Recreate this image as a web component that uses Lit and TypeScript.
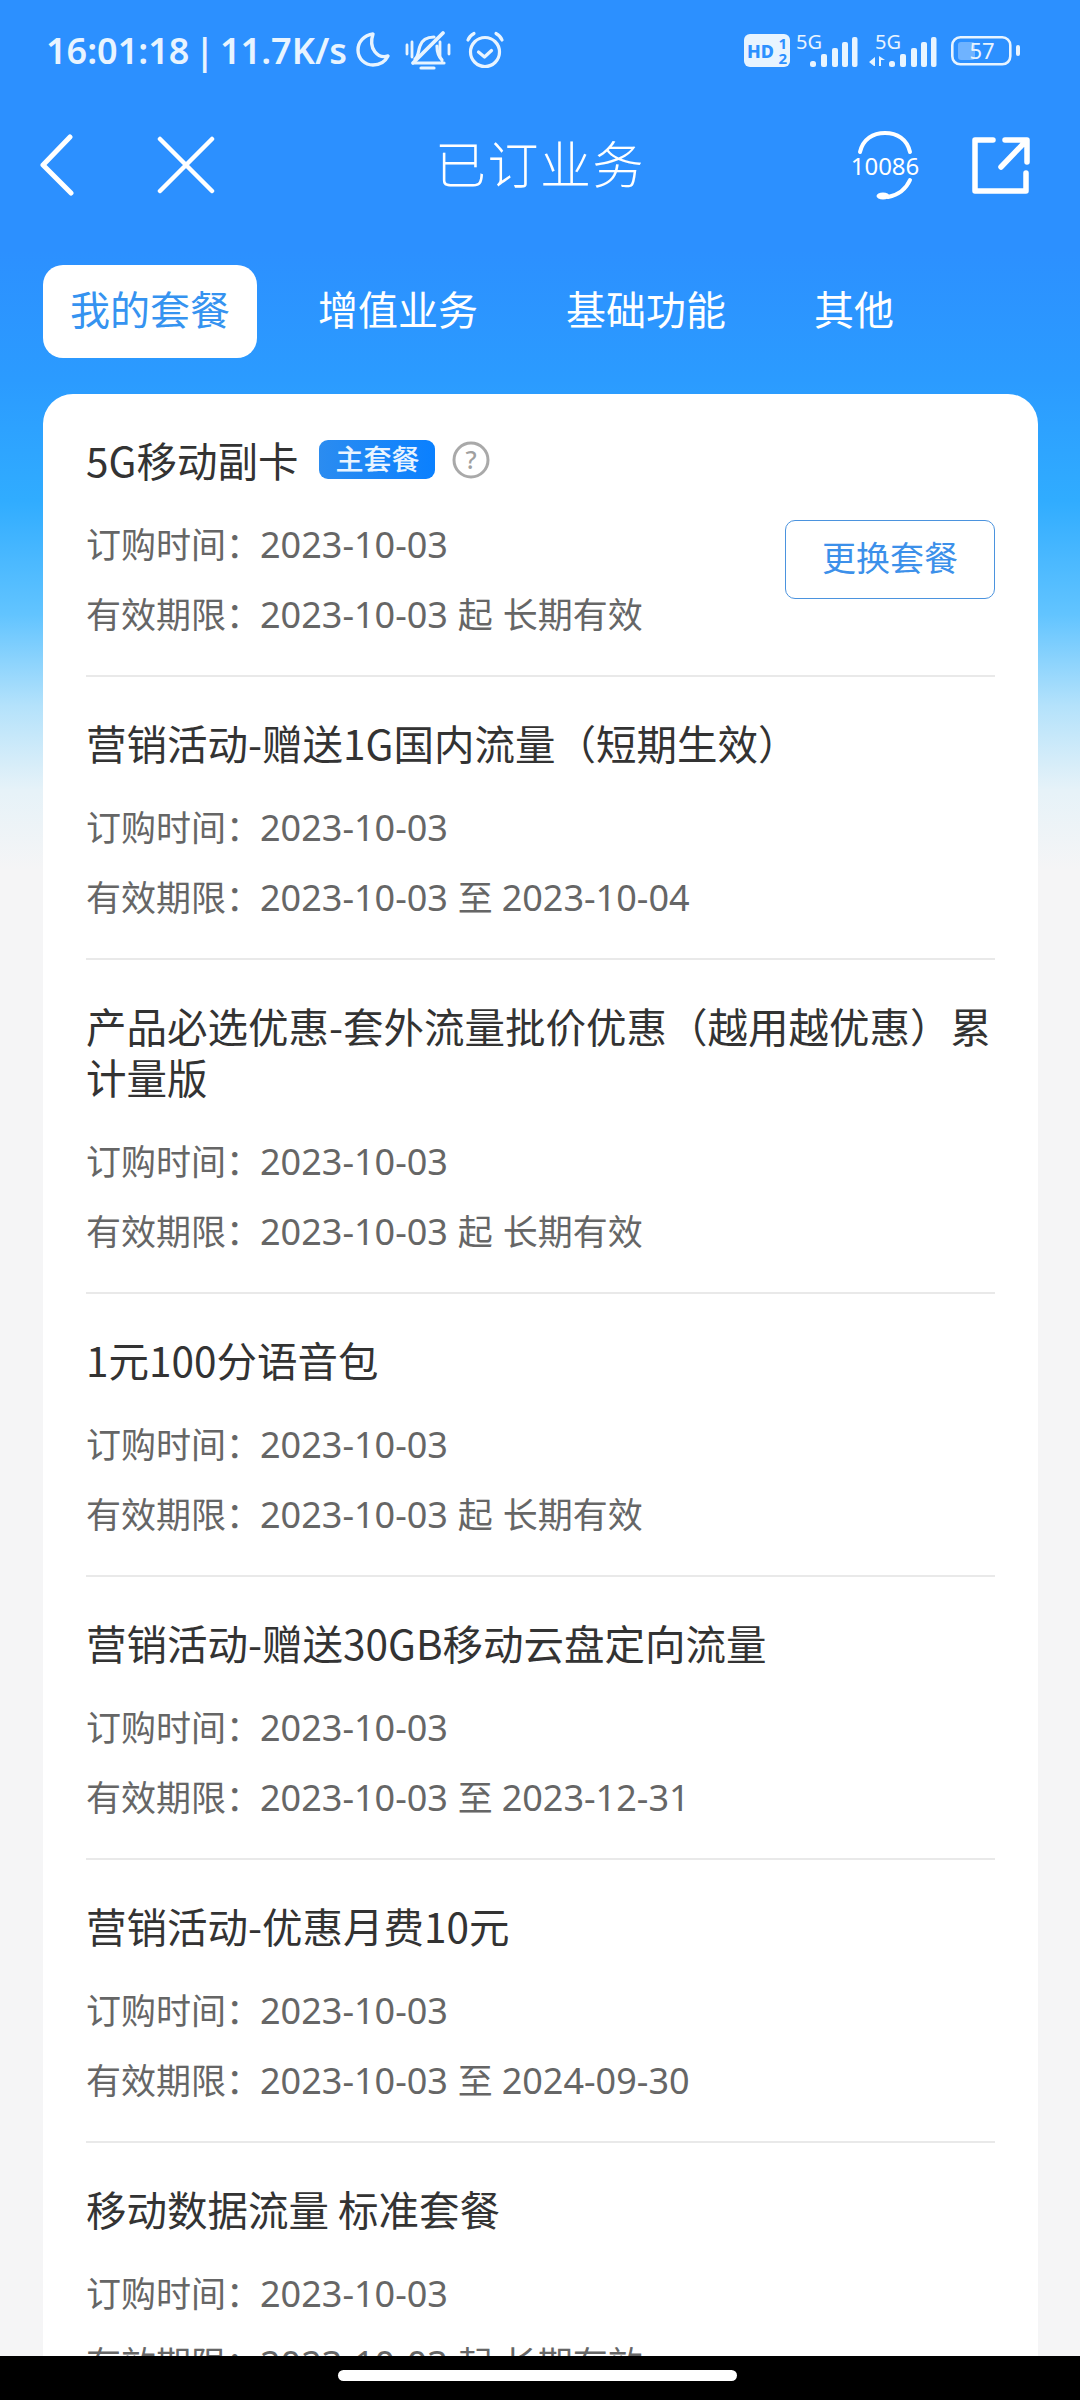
import { LitElement, html, css, svg } from "lit";
import { customElement } from "lit/decorators.js";

interface Item { title: string; time: string; term: string; main?: boolean; }
const items: Item[] = [
  { title: "5G移动副卡", time: "2023-10-03", term: "2023-10-03 起 长期有效", main: true },
  { title: "营销活动-赠送1G国内流量（短期生效）", time: "2023-10-03", term: "2023-10-03 至 2023-10-04" },
  { title: "产品必选优惠-套外流量批价优惠（越用越优惠）累计量版", time: "2023-10-03", term: "2023-10-03 起 长期有效" },
  { title: "1元100分语音包", time: "2023-10-03", term: "2023-10-03 起 长期有效" },
  { title: "营销活动-赠送30GB移动云盘定向流量", time: "2023-10-03", term: "2023-10-03 至 2023-12-31" },
  { title: "营销活动-优惠月费10元", time: "2023-10-03", term: "2023-10-03 至 2024-09-30" },
  { title: "移动数据流量 标准套餐", time: "2023-10-03", term: "2023-10-03 起 长期有效" },
];

const bars = svg`<rect x="0" y="24" width="6" height="6" rx="2.500"/><rect x="11" y="17" width="6" height="13" rx="2"/><rect x="22" y="11" width="6" height="19" rx="2"/><rect x="32" y="5" width="6" height="25" rx="2"/><rect x="42" y="0" width="5.500" height="30" rx="2"/>`;

@customElement("app-root")
export class AppRoot extends LitElement {
  static styles = css`
    :host { display: block; width: 1080px; height: 2400px; overflow: hidden; font-family: "Noto Sans CJK SC", "Noto Sans", sans-serif; }
    .page { height: 2400px; display: flex; flex-direction: column;
      background: linear-gradient(180deg, #2c90ff 0, #2c90ff 250px, #2b9bff 380px, #30acff 500px, #62c4ff 615px, #b4e2fb 706px, #e6f2f8 790px, #f5f5f6 870px, #f5f5f6 100%); }
    .status { height: 100px; box-sizing: border-box; padding: 0 60px 0 46px; display: flex; align-items: center; color: #e8f4ff; flex: none; }
    .clock { font: 600 36px "Noto Sans", sans-serif; word-spacing: -4px; white-space: nowrap; }
    .status svg { display: block; flex: none; }
    .moon { margin-left: 8px; }
    .bell, .alarm { margin-left: 14px; }
    .spacer { flex: 1; }
    .nav { height: 130px; flex: none; display: grid; grid-template-columns: 1fr auto 1fr; align-items: center; padding: 0 40px; }
    .nav-left { display: flex; align-items: center; gap: 83px; }
    .nav-right { display: flex; align-items: center; justify-content: flex-end; gap: 52px; margin-right: 10px; }
    .nav svg { display: block; }
    .nav-title { color: #fff; font-size: 51px; font-weight: 300; letter-spacing: 1.500px; line-height: 60px; margin-top: -6px; }
    .tabs { flex: none; display: flex; align-items: center; padding: 35px 0 0 43px; height: 93px; }
    .tab { color: #fff; font-size: 40px; height: 93px; line-height: 87px; padding: 0 27px; margin-right: 34px; box-sizing: border-box; white-space: nowrap; }
    .tab.active { background: #fff; color: #3593f0; border-radius: 20px; }
    .body { flex: 1; min-height: 0; overflow: hidden; padding: 36px 42px 0 43px; }
    .card { background: #fff; border-radius: 30px 30px 0 0; padding: 0 43px; }
    .item { padding: 40px 0 27px; border-bottom: 2px solid #e9e9e9; }
    .item:last-child { border-bottom: none; }
    .title { color: #333; font-size: 40.500px; line-height: 51px; display: flex; align-items: center; }
    .title-text { min-width: 0; }
    .badge { margin-left: 21px; width: 116px; height: 39px; border-radius: 9px; flex: none; background: linear-gradient(90deg, #2b8cf0, #0a80ff); color: #e9f4ff; font-size: 28px; font-weight: 500; line-height: 37px; text-align: center; }
    .help { margin-left: 17px; flex: none; display: block; }
    .rows { margin-top: 23px; position: relative; }
    .row { color: #666; font-size: 35px; height: 70px; line-height: 69px; white-space: nowrap; word-spacing: 2px; }
    .row .val { font-family: "Noto Sans", sans-serif; font-size: 36px; word-spacing: 0; margin-left: -1px; }
    .change { position: absolute; right: 0; top: 12px; width: 210px; height: 79px; box-sizing: border-box; border: 1.500px solid #4b93de; border-radius: 10px; color: #3c90ea; font-size: 34px; line-height: 72px; text-align: center; background: #fff; }
    .home { flex: none; height: 44px; background: #000; display: flex; justify-content: center; padding-top: 14px; box-sizing: border-box; }
    .pill { width: 399px; height: 11px; background: #fff; border-radius: 6px; margin-left: -5px; }
  `;

  private statusIcons() {
    return html`
      <svg class="moon" width="36" height="38" viewBox="0 0 36 38" fill="none" stroke="#e8f4ff" stroke-width="3.400" stroke-linecap="round" stroke-linejoin="round"><path d="M18 3C9 4 3 11 3 19c0 9 7 15 15 15 7 0 12-3 15-9-10 3-20-7-15-22z"/></svg>
      <svg class="bell" width="46" height="40" viewBox="0 0 46 40" fill="none" stroke="#e8f4ff" stroke-width="3" stroke-linecap="round" stroke-linejoin="round"><path d="M2 15v9M7 12v15M35 12v15M44 15v9" stroke-width="2.800"/><path d="M10 29c4-3 3-8 5-13 2-6 7-9 14-9M32 16c0 6 2 11 5 14M10 33h29M16 38h13" stroke-width="3.200"/><path d="M8 33 38 3" stroke-width="3.800"/></svg>
      <svg class="alarm" width="40" height="38" viewBox="0 0 40 38" fill="none" stroke="#e8f4ff" stroke-width="3.200" stroke-linecap="round" stroke-linejoin="round"><circle cx="20" cy="21" r="14.500"/><path d="M13.500 21l6 5 7-6.500M3 9c1-3 3-5 6-6.500M37 9c-1-3-3-5-6-6.500"/></svg>
      <div class="spacer"></div>
      <svg width="276" height="44" viewBox="0 -4 276 44">
        <rect x="0" y="2" width="46" height="33" rx="6" fill="#e8f4ff"/>
        <text x="3" y="26" font-family="Noto Sans" font-weight="800" font-size="18" fill="#2c90ff">HD</text>
        <text x="34.500" y="17" font-family="Noto Sans" font-weight="700" font-size="15" fill="#2c90ff">1</text>
        <text x="34.500" y="32" font-family="Noto Sans" font-weight="700" font-size="15" fill="#2c90ff">2</text>
        <text x="52" y="17" font-family="Noto Sans" font-size="20" fill="#e8f4ff">5G</text>
        <g fill="#e8f4ff" transform="translate(66 5)">${bars}</g>
        <text x="131" y="17" font-family="Noto Sans" font-size="20" fill="#e8f4ff">5G</text>
        <path d="M131 25v9h-1l-5-4zM135 24v10h2v-6h4z" fill="#e8f4ff"/>
        <g fill="#e8f4ff" transform="translate(145 5)">${bars}</g>
        <g transform="translate(207 0)">
          <rect x="1.300" y="5.300" width="58" height="27" rx="8" fill="none" stroke="#e8f4ff" stroke-width="2.600"/>
          <rect x="7" y="10" width="17" height="18" rx="3" fill="#6fb3ff"/>
          <text x="31" y="27" text-anchor="middle" font-family="Noto Sans" font-size="22" fill="#e8f4ff">57</text>
          <rect x="65" y="13" width="4" height="11" rx="2" fill="#e8f4ff"/>
        </g>
      </svg>`;
  }

  private term(text: string) {
    const parts = text.split(" ");
    return parts.map((p, i) => html`${/^\d/.test(p) ? html`<span class="val">${p}</span>` : p}${i < parts.length - 1 ? " " : ""}`);
  }

  render() {
    return html`<div class="page">
      <div class="status">
        <span class="clock">16:01:18 | 11.7K/s</span>
        ${this.statusIcons()}
      </div>
      <div class="nav">
        <div class="nav-left">
          <svg width="34" height="62" viewBox="0 0 34 62" fill="none" stroke="#fff" stroke-width="5" stroke-linecap="round" stroke-linejoin="round"><path d="M30 3 3 31l28 28"/></svg>
          <svg width="58" height="58" viewBox="0 0 58 58" fill="none" stroke="#fff" stroke-width="4.500" stroke-linecap="round"><path d="M3 3l52 52M55 3 3 55"/></svg>
        </div>
        <div class="nav-title">已订业务</div>
        <div class="nav-right">
          <svg width="70" height="70" viewBox="0 0 70 70" fill="none"><path d="M10 22C13 9 23 3 35 3s22 6 25 19M60 50c-4 9-12 15-22 17" stroke="#fff" stroke-width="4" stroke-linecap="round"/><ellipse cx="33" cy="66" rx="6.500" ry="3.500" fill="#fff"/><text x="35" y="45" text-anchor="middle" font-family="Noto Sans" font-size="24" fill="#fff">10086</text></svg>
          <svg width="58" height="58" viewBox="0 0 58 58" fill="none" stroke="#fff" stroke-width="5.500" stroke-linecap="round" stroke-linejoin="round"><path d="M21 4H3v51h51V37M33 4h22v22M53 6 29 31"/></svg>
        </div>
      </div>
      <div class="tabs">
        <div class="tab active">我的套餐</div>
        <div class="tab">增值业务</div>
        <div class="tab">基础功能</div>
        <div class="tab">其他</div>
      </div>
      <div class="body">
        <div class="card">
          ${items.map((it) => html`<div class="item">
            <div class="title">
              <span class="title-text">${it.title}</span>
              ${it.main ? html`<span class="badge">主套餐</span>
                <svg class="help" width="38" height="38" viewBox="0 0 38 38" fill="none"><circle cx="19" cy="19" r="17" stroke="#a9a9a9" stroke-width="3"/><text x="19" y="28" text-anchor="middle" font-family="Noto Sans" font-size="25" font-weight="500" fill="#a0a0a0">?</text></svg>` : ""}
            </div>
            <div class="rows">
              <div class="row">订购时间：<span class="val">${it.time}</span></div>
              <div class="row">有效期限：${this.term(it.term)}</div>
              ${it.main ? html`<div class="change">更换套餐</div>` : ""}
            </div>
          </div>`)}
        </div>
      </div>
      <div class="home"><div class="pill"></div></div>
    </div>`;
  }
}
